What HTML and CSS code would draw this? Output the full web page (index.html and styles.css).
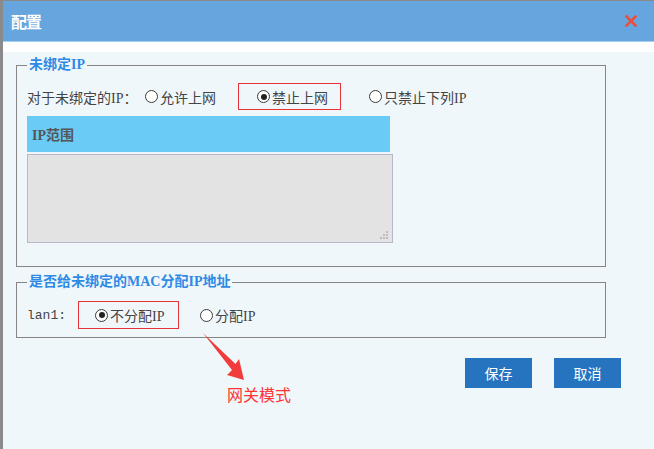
FILE: index.html
```html
<!DOCTYPE html>
<html>
<head>
<meta charset="utf-8">
<link rel="stylesheet" href="styles.css">
</head>
<body>
<div class="dialog">
  <div class="titlebar">
    <span class="title">配置</span>
    <svg class="close" width="12" height="12" viewBox="0 0 12 12"><path d="M1.5 1.5 L10.5 10.5 M10.5 1.5 L1.5 10.5" stroke="#ea4f3c" stroke-width="2.6" stroke-linecap="square"/></svg>
  </div>
  <div class="band"></div>
  <div class="content">
    <fieldset class="group group-ip">
      <legend>未绑定IP</legend>
      <div class="row">
        <span class="label">对于未绑定的IP：</span>
        <span class="opt opt-first"><span class="radio"></span><span>允许上网</span></span>
        <span class="opt boxed boxed-a"><span class="radio checked"></span><span>禁止上网</span></span>
        <span class="opt opt-third"><span class="radio"></span><span>只禁止下列IP</span></span>
      </div>
      <div class="range-head">IP范围</div>
      <div class="range-area"><svg class="grip" width="10" height="10" viewBox="0 0 10 10"><rect x="7" y="1" width="2" height="2"/><rect x="4" y="4" width="2" height="2"/><rect x="7" y="4" width="2" height="2"/><rect x="1" y="7" width="2" height="2"/><rect x="4" y="7" width="2" height="2"/><rect x="7" y="7" width="2" height="2"/></svg></div>
    </fieldset>
    <fieldset class="group group-mac">
      <legend>是否给未绑定的MAC分配IP地址</legend>
      <div class="row row-mac">
        <span class="mono">lan1:</span>
        <span class="opt boxed boxed-b"><span class="radio checked"></span><span>不分配IP</span></span>
        <span class="opt opt-assign"><span class="radio"></span><span>分配IP</span></span>
      </div>
    </fieldset>
    <div class="actions">
      <button class="btn">保存</button>
      <button class="btn">取消</button>
    </div>
  </div>
  <svg class="arrow" width="50" height="50" viewBox="0 0 50 50"><polygon points="0,0 32.5,31 36,26 41,47 24,42 29,37" fill="#f23c3c"/></svg>
  <div class="note">网关模式</div>
</div>
</body>
</html>
```
FILE: styles.css
```css
html, body {
  margin: 0;
  padding: 0;
}
body {
  background: #8a8a8a;
  font-family: "Liberation Serif", "Noto Sans CJK SC", serif;
  overflow: hidden;
}
.dialog {
  margin: 1px 0 0 3px;
  width: 651px;
  height: 448px;
  background: #f0f7fa;
  display: flex;
  flex-direction: column;
  position: relative;
}
.titlebar {
  height: 40px;
  background: #66a5dd;
  border-bottom: 1px solid #a4d0f3;
  display: flex;
  align-items: center;
  justify-content: space-between;
  padding: 0 17px 0 8px;
}
.title {
  color: #fff;
  font: bold 16px "Noto Sans CJK SC", sans-serif;
  letter-spacing: -1px;
}
.close {
  display: block;
  margin-top: 0;
}
.band {
  height: 10px;
  background: #fff;
}
.content {
  padding: 5px 0 0 13px;
}
.group {
  box-sizing: border-box;
  width: 590px;
  margin: 0;
  border: 1px solid #858585;
  padding: 10px 10px 23px 10px;
}
.group legend {
  padding: 0 2px;
  font-size: 14px;
  line-height: 16px;
  font-weight: bold;
  color: #2e8ae6;
  font-family: "Liberation Serif", "Noto Sans CJK SC", serif;
}
.group-mac {
  margin-top: 7px;
  padding: 11px 10px 8px 10px;
}
.row {
  display: flex;
  align-items: center;
  height: 27px;
  font-size: 14px;
  color: #444;
}
.row-mac {
  height: 28px;
}
.label {
  width: 118px;
}
.opt {
  display: inline-flex;
  align-items: center;
  gap: 2px;
}
.radio {
  box-sizing: border-box;
  width: 13px;
  height: 13px;
  border: 1.5px solid #3a3a3a;
  border-radius: 50%;
  background: #fff;
  display: inline-flex;
  align-items: center;
  justify-content: center;
}
.radio.checked::after {
  content: "";
  width: 6px;
  height: 6px;
  border-radius: 50%;
  background: #222;
}
.boxed {
  box-sizing: border-box;
  height: 100%;
  border: 1px solid #e8323a;
}
.boxed-a {
  margin-left: 22px;
  width: 103px;
  padding-left: 18px;
}
.opt-third {
  margin-left: 28px;
}
.mono {
  font-family: "Liberation Mono", monospace;
  font-size: 13px;
  width: 51px;
}
.boxed-b {
  width: 101px;
  padding-left: 16px;
}
.opt-assign {
  margin-left: 21px;
}
.range-head {
  margin-top: 6px;
  width: 363px;
  height: 36px;
  box-sizing: border-box;
  background: #69cbf6;
  color: #555;
  font-weight: bold;
  font-size: 14px;
  padding-left: 5px;
  display: flex;
  align-items: center;
}
.range-area {
  margin-top: 2px;
  box-sizing: border-box;
  width: 366px;
  height: 89px;
  background: #e3e3e3;
  border: 1px solid #b8b8c8;
  position: relative;
}
.grip {
  position: absolute;
  right: 3px;
  bottom: 2px;
  fill: #bdbdbd;
}
.actions {
  display: flex;
  justify-content: flex-end;
  gap: 22px;
  margin: 20px 33px 0 0;
}
.btn {
  width: 67px;
  height: 30px;
  border: none;
  background: #2674c0;
  color: #fff;
  font: 14px "Noto Sans CJK SC", sans-serif;
  padding: 0;
}
.arrow {
  position: absolute;
  left: 200px;
  top: 332px;
}
.note {
  position: absolute;
  left: 224px;
  top: 382px;
  color: #f33;
  font: 16px "Noto Sans CJK SC", sans-serif;
  line-height: 22px;
}
```
